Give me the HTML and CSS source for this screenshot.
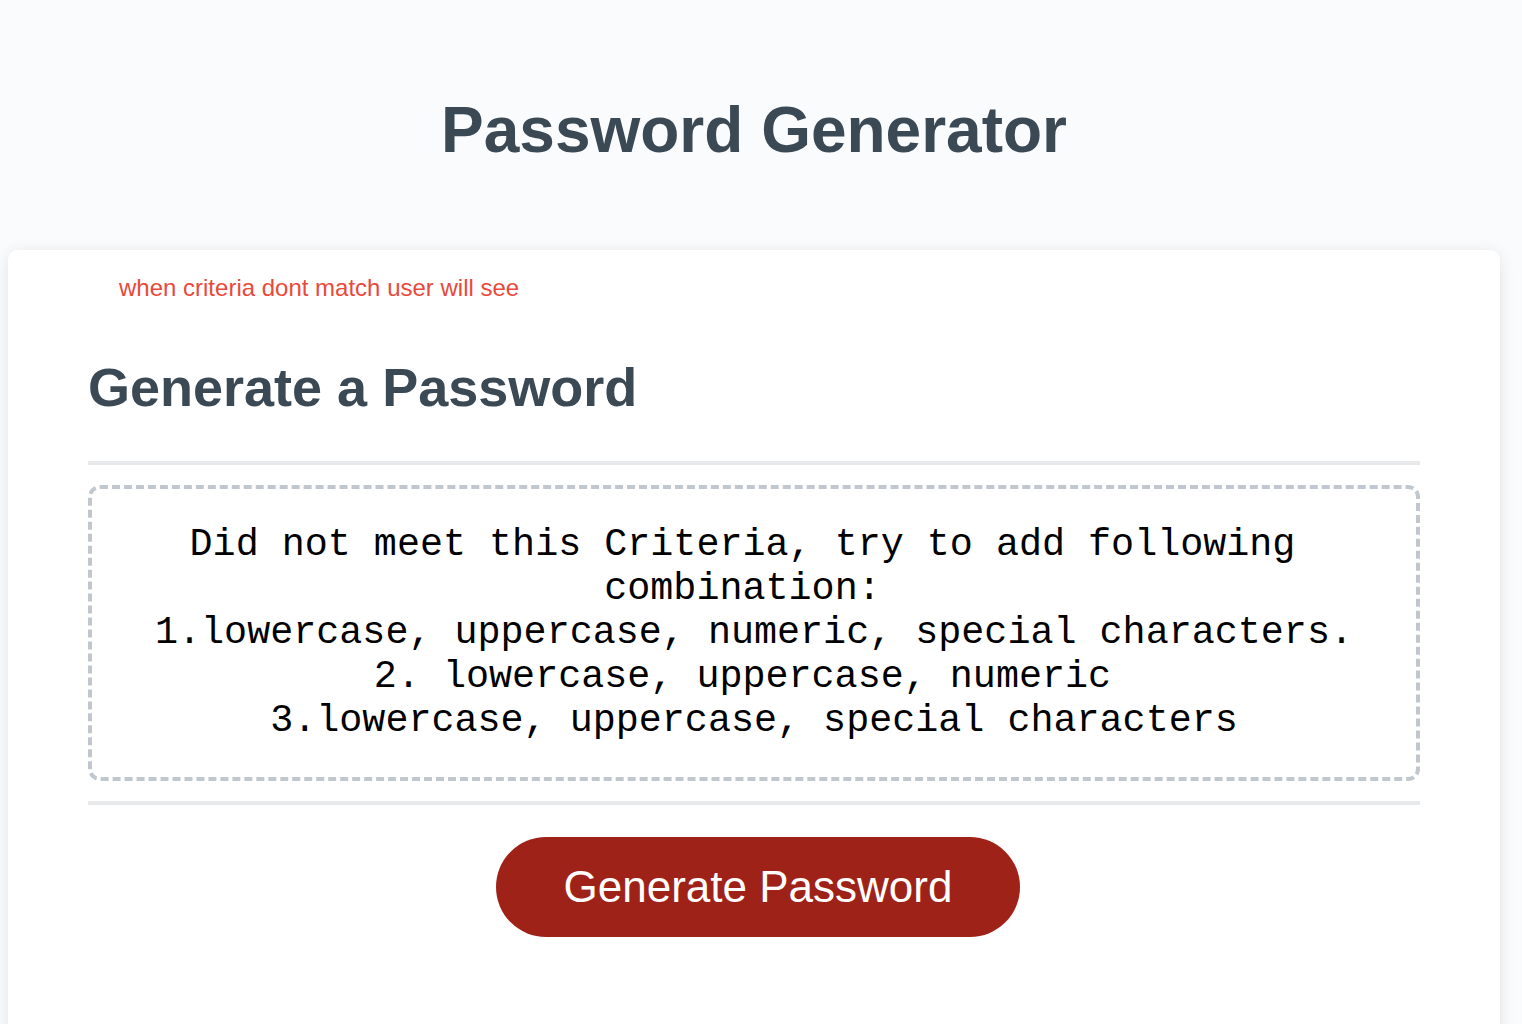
FILE: index.html
```html
<!DOCTYPE html>
<html lang="en">
<head>
<meta charset="UTF-8">
<title>Password Generator</title>
<link rel="stylesheet" href="styles.css">
</head>
<body>
<div class="wrapper">
  <header class="page-header">
    <h1 class="title">Password Generator</h1>
  </header>
  <div class="card">
    <p class="note">when criteria dont match user will see</p>
    <div class="card-header">
      <h2 class="card-title">Generate a Password</h2>
    </div>
    <div class="card-body">
      <div class="password-box">Did not meet this Criteria, try to add following combination: 
1.lowercase, uppercase, numeric, special characters.
2. lowercase, uppercase, numeric 
3.lowercase, uppercase, special characters</div>
    </div>
    <div class="card-footer">
      <button class="btn" type="button">Generate Password</button>
    </div>
  </div>
</div>
</body>
</html>
```

FILE: styles.css
```css
html, body {
  margin: 0;
  padding: 0;
}

body {
  background-color: #f9fbfd;
  font-family: "Liberation Sans", Arial, Helvetica, sans-serif;
  color: #3b4954;
  overflow: hidden;
}

.wrapper {
  margin: 0 22px 0 8px;
}

.page-header {
  text-align: center;
  padding: 93px 0 83px;
}

.title {
  margin: 0;
  font-size: 64px;
  font-weight: bold;
  line-height: 74px;
  color: #3b4954;
}

.card {
  background: #ffffff;
  border-radius: 10px;
  box-shadow: 0 3px 16px rgba(0, 0, 0, 0.10);
  padding: 24px 80px 80px;
  min-height: 900px;
}

.note {
  margin: 0 0 0 31px;
  font-size: 24px;
  line-height: 28px;
  color: #e9493b;
}

.card-title {
  margin: 54px 0 43px;
  font-size: 54px;
  line-height: 62px;
  font-weight: bold;
  color: #3b4954;
}

.card-header::after {
  content: "";
  display: block;
  height: 4px;
  background: #e7e9eb;
}

.card-body {
  padding: 20px 0 20px;
}

.password-box {
  box-sizing: border-box;
  height: 296px;
  border: 4px dashed #c0c7cf;
  border-radius: 12px;
  padding: 34px 30px 0;
  font-family: "Liberation Mono", "Courier New", monospace;
  font-size: 38.4px;
  line-height: 44px;
  color: #000000;
  text-align: center;
  white-space: break-spaces;
  overflow: hidden;
}

.card-footer {
  text-align: center;
}

.card-footer::before {
  content: "";
  display: block;
  height: 4px;
  background: #e7e9eb;
}

.btn {
  display: inline-block;
  margin: 32px 32px 32px 40px;
  border: none;
  border-radius: 50px;
  background-color: #9f2219;
  color: #ffffff;
  font-family: "Liberation Sans", Arial, Helvetica, sans-serif;
  font-size: 44px;
  line-height: 44px;
  padding: 28px 68px;
  cursor: pointer;
}
```
